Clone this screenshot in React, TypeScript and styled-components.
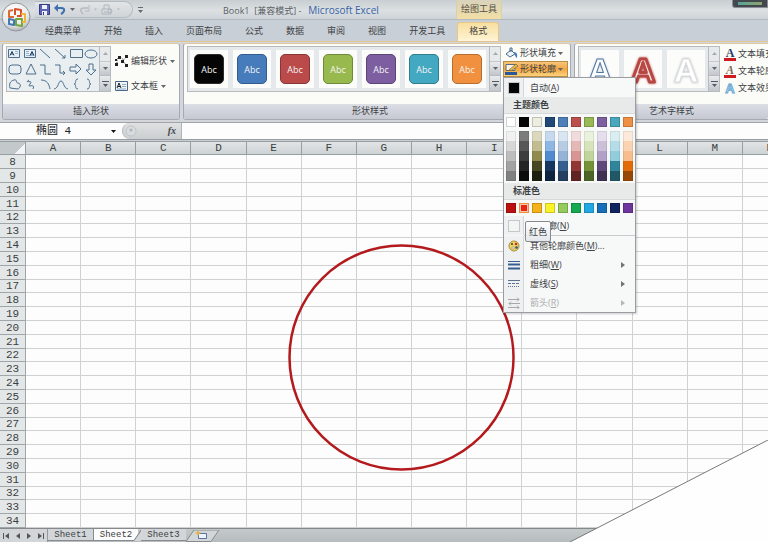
import React from 'react';
import styled, { createGlobalStyle, css } from 'styled-components';

const ui = '"Open Sans", "Noto Sans CJK SC", sans-serif';
const sheetFont = '"Liberation Mono", "Noto Sans CJK SC", monospace';

const GlobalStyle = createGlobalStyle`
  * { box-sizing: border-box; }
  body { margin: 0; background: #c9cfd4; font: 9px/12px ${ui}; color: #3c3f44; overflow: hidden; }
  button, input { font: inherit; color: inherit; border: 0; padding: 0; margin: 0; background: none; }
  svg { display: block; flex: none; }
`;

const Window = styled.div`
  position: relative;
  overflow: hidden;
`;

const TitleBar = styled.header`
  display: flex;
  height: 20px;
  background: linear-gradient(#c8ced2, #dce0e2 55%, #cdd3d8);
  border-bottom: 1px solid #b3babf;
`;

const OfficeButton = styled.button`
  position: absolute;
  left: 1px;
  top: 2px;
  z-index: 2;
`;

const QuickAccess = styled.div`
  display: flex;
  align-items: center;
  gap: 4px;
  width: 98px;
  height: 17px;
  margin: 1px 0 0 35px;
  padding-left: 4px;
  border: 1px solid #b4bcc2;
  border-left: 0;
  border-radius: 0 9px 9px 0;
  background: linear-gradient(#e2e5e7, #cfd4d8);
`;

const Customize = styled.button`
  width: 10px;
  display: flex;
  align-items: center;
  justify-content: flex-end;
`;

const Caption = styled.h1`
  margin: 0 0 0 80px;
  width: 233px;
  font-size: 9px;
  font-weight: 400;
  line-height: 20px;
  white-space: pre;
  color: #5a5e64;
`;

const AppName = styled.span`
  font-size: 10px;
  color: #3563a5;
  margin-left: 7px;
`;

const ContextLabel = styled.div`
  width: 46px;
  text-align: center;
  line-height: 18px;
  background: linear-gradient(#d9d3bd, #f1dfa5);
  border: solid #d9cfaa;
  border-width: 0 1px;
  color: #545045;
`;

const Meter = styled.div`
  width: 36px;
  height: 8px;
  margin-left: auto;
  padding: 2px 5px;
  background: #43484f;
  border: 1px solid #8b8f95;
  border-top: 0;
  border-radius: 0 0 0 3px;
`;

const MeterBar = styled.div`
  height: 3px;
  background: linear-gradient(90deg, #55a49a, #8fa36d);
`;

const Tabs = styled.nav`
  display: flex;
  gap: 1px;
  height: 21px;
  padding-left: 34px;
  background: #c9cfd6;
`;

const Tab = styled.button<{ $active?: boolean }>`
  padding: 0 11px;
  white-space: nowrap;
  ${p => p.$active && css`
    margin-top: 2px;
    padding-bottom: 3px;
    border: 1px solid #e5c887;
    border-bottom: 0;
    border-radius: 3px 3px 0 0;
    background: linear-gradient(#f8dfa0, #fdefc8 80%, #fff5dc);
  `}
`;

const Ribbon = styled.div`
  display: flex;
  gap: 3px;
  padding: 1px 0 2px 2px;
  border-top: 1px solid #e3c792;
  border-bottom: 1px solid #a0a4a9;
  background: #d3d7db;
`;

const GroupBox = styled.section<{ $fill?: boolean }>`
  display: flex;
  flex-direction: column;
  border: 1px solid #a5a9b0;
  border-top-color: #dcc9a0;
  border-radius: 3px;
  background: #fbfbf8;
  ${p => p.$fill && css`
    flex: 1;
    min-width: 0;
    border-right: 0;
    border-radius: 3px 0 0 3px;
  `}
`;

const GroupBody = styled.div<{ $clip?: boolean }>`
  display: flex;
  height: 60px;
  gap: 2px;
  padding: 2px 1px 0 3px;
  overflow: ${p => (p.$clip ? 'hidden' : 'visible')};
`;

const GroupTitle = styled.h2<{ $shift?: boolean }>`
  margin: 0;
  height: 15px;
  padding-right: ${p => (p.$shift ? 14 : 0)}px;
  font-size: 9px;
  font-weight: 400;
  line-height: 14px;
  text-align: center;
  background: linear-gradient(#dcdee6, #c6c9d2);
  border-radius: 0 0 2px 2px;
`;

const Gallery = styled.div`
  display: flex;
  flex: none;
  height: 46px;
  border: 1px solid #b7bbc0;
  background: #e5e9eb;
`;

const ShapesPane = styled.div`
  background: #e9eef0;
`;

const Spinner = styled.div`
  display: grid;
  grid-template-rows: repeat(3, 1fr);
  width: 11px;
  border-left: 1px solid #b7bbc0;
`;

const SpinButton = styled.button<{ $dim?: boolean }>`
  display: grid;
  place-items: center;
  border-bottom: 1px solid #b7bbc0;
  background: ${p => (p.$dim ? '#e9ebec' : 'linear-gradient(#e9ebee, #c2c7cd)')};
  opacity: ${p => (p.$dim ? 0.7 : 1)};
  &:last-child { border-bottom: 0; }
`;

const Cells = styled.div`
  display: flex;
  gap: 5px;
  padding: 3px 3px 3px 2px;
`;

const Cell = styled.button`
  display: grid;
  place-items: center;
  width: 38px;
  background: #fcfcfb;
`;

const StyleChip = styled.span<{ $bg: string; $edge: string }>`
  width: 30px;
  height: 30px;
  border: 1px solid ${p => p.$edge};
  border-radius: 5px;
  background: ${p => p.$bg};
  color: #f4f4f4;
  font-size: 9px;
  line-height: 29px;
`;

const Commands = styled.div<{ $gap: number; $top: number }>`
  display: flex;
  flex-direction: column;
  gap: ${p => p.$gap}px;
  padding-top: ${p => p.$top}px;
`;

const Command = styled.button<{ $hot?: boolean; $roomy?: boolean }>`
  display: flex;
  align-items: center;
  gap: ${p => (p.$roomy ? 3 : 2)}px;
  height: 16px;
  padding: 0 2px 0 1px;
  white-space: nowrap;
  border: 1px solid transparent;
  ${p => p.$hot && css`
    width: 65px;
    border-color: #b98c44;
    background: linear-gradient(#f7c67b, #f3a542 50%, #fbd27c);
  `}
`;

const CommandColumn = styled.div`
  display: flex;
  flex-direction: column;
  width: 66px;
  margin-top: -1px;
`;

const MenuAnchor = styled.div`
  position: relative;
`;

const Menu = styled.div`
  position: absolute;
  z-index: 5;
  top: 16px;
  left: 0;
  width: 133px;
  border: 1px solid #9a9da1;
  background: #f7f8f8;
  box-shadow: 1px 1px 2px #0003;
`;

const MenuItem = styled.button<{ $disabled?: boolean }>`
  display: grid;
  grid-template-columns: 20px 1fr 14px;
  width: 100%;
  height: 19px;
  align-items: center;
  text-align: left;
  color: ${p => (p.$disabled ? '#a9abad' : '#3f4245')};
`;

const Gutter = styled.span`
  display: grid;
  place-items: center;
  height: 19px;
  background: #eff0f1;
  border-right: 1px solid #d4d6d8;
`;

const ItemText = styled.span`
  padding-left: 6px;
  white-space: nowrap;
`;

const MenuHeading = styled.h3`
  margin: 0;
  height: 17px;
  padding-left: 9px;
  font-size: 9px;
  line-height: 16px;
  font-weight: 700;
  background: #e8eaea;
  border-bottom: 1px solid #d6d8da;
`;

const Swatches = styled.div<{ $tight?: boolean }>`
  display: grid;
  grid-template-columns: repeat(10, 10px);
  column-gap: 3px;
  padding: ${p => (p.$tight ? '1px 0 2px 2px' : '3px 0 3px 2px')};
`;

const Swatch = styled.button<{ $color: string; $on?: boolean; $tall?: boolean }>`
  height: 10px;
  background: ${p => p.$color};
  border: ${p => (p.$tall ? '0 solid' : '1px solid')} ${p => (p.$on ? '#ef8b3f' : '#0000002e')};
  box-shadow: ${p => (p.$on ? 'inset 0 0 0 1px #f7c9a0' : 'none')};
`;

const Shades = styled.div`
  display: grid;
  outline: 1px solid #00000014;
  outline-offset: -1px;
`;

const Blank = styled.span<{ $color: string }>`
  width: 12px;
  height: 12px;
  background: ${p => p.$color};
  border: 1px solid #c5c7c8;
`;

const Divider = styled.hr`
  margin: 0 0 0 20px;
  border: 0;
  border-top: 1px solid #c9cccf;
`;

const TipAnchor = styled.div`
  position: relative;
`;

const Tip = styled.div`
  position: absolute;
  z-index: 6;
  left: 21px;
  top: 5px;
  padding: 3px;
  border: 1px solid #85888c;
  border-radius: 2px;
  background: linear-gradient(#fdfdfd, #e4e7ec);
  font-size: 9px;
  line-height: 13px;
`;

const FormulaBar = styled.div`
  display: flex;
  height: 17px;
  border-bottom: 1px solid #989da2;
  background: #fdfdfd;
`;

const NameBox = styled.div`
  display: flex;
  width: 122px;
  align-items: center;
  background: #fdfdfd;
`;

const NameInput = styled.input`
  width: 111px;
  padding-left: 36px;
  font: 11px/14px ${sheetFont};
  color: #222;
`;

const FxZone = styled.div`
  display: flex;
  align-items: center;
  justify-content: space-between;
  width: 60px;
  padding: 0 5px 0 2px;
  border: 1px solid #b2b5b7;
  border-width: 0 1px;
  border-radius: 8px 0 0 8px;
  background: linear-gradient(#dfe1e2, #cbced0);
`;

const Fx = styled.button`
  font: italic 700 10px/14px "Liberation Serif", serif;
  color: #44474b;
`;

const FormulaInput = styled.input`
  flex: 1;
  min-width: 0;
`;

const Sheet = styled.main`
  position: relative;
  margin-top: 1px;
  background: #fcfdfc;
`;

const Grid = styled.table`
  width: calc(100% + 30px);
  table-layout: fixed;
  border-collapse: separate;
  border-spacing: 0;
  font: 11px/12px ${sheetFont};
  color: #3b3f41;
`;

const Corner = styled.th`
  width: 26px;
  height: 14px;
  padding: 0;
  border: solid #989da1;
  border-width: 1px 1px 1px 0;
  background: linear-gradient(135deg, #c3c8cb 72%, #f2f4f5 73%);
`;

const ColHead = styled.th`
  padding: 0;
  height: 14px;
  line-height: 12px;
  font-weight: 400;
  border: solid #989da1;
  border-width: 1px 1px 1px 0;
  background: linear-gradient(#e2e5e6, #cdd2d4);
`;

const Row = styled.tr`
  height: 14px;
  &:nth-child(5n) { height: 13px; }
`;

const RowHead = styled.th`
  padding: 0;
  line-height: 12px;
  font-weight: 400;
  border: solid #a0a5a8;
  border-width: 0 1px 1px 0;
  background: #e4e7e8;
`;

const Data = styled.td`
  padding: 0;
  border: solid #d0d2d2;
  border-width: 0 1px 1px 0;
`;

const Ellipse = styled.svg`
  position: absolute;
  left: 287px;
  top: 102px;
`;

const SheetBar = styled.footer`
  display: flex;
  height: 14px;
  border-top: 1px solid #85898c;
  background: linear-gradient(#c3c8c8, #b7bdbf);
`;

const SheetNav = styled.div`
  display: flex;
  align-items: center;
  justify-content: space-around;
  width: 48px;
  background: #d2d6d8;
  border-right: 1px solid #95999c;
`;

const SheetTabs = styled.div`
  display: flex;
  height: 12px;
  font: 9px/12px ${sheetFont};
`;

const SheetTab = styled.button<{ $active?: boolean }>`
  width: 45px;
  background: ${p => (p.$active ? '#fbfcfb' : '#d2d6d8')};
  border-bottom: 1px solid #888c90;
  ${p => p.$active && css`border-left: 1px solid #888c90;`}
`;

const TabEdge = styled.svg`
  margin: 0 -2px 0 -4px;
`;

const PageCurl = styled.svg`
  position: absolute;
  right: 0;
  bottom: 0;
  z-index: 3;
`;

const Caret = ({ color = '#63676c', size = 5 }: { color?: string; size?: number }) => (
  <svg width={size} height="3" viewBox="0 0 5 3"><path d="M0 0h5L2.500 3z" fill={color} /></svg>
);

const Spin = () => (
  <Spinner>
    <SpinButton $dim aria-label="上一行"><svg width="5" height="3"><path d="M0 3h5L2.500 0z" fill="#8a8f95" /></svg></SpinButton>
    <SpinButton aria-label="下一行"><Caret /></SpinButton>
    <SpinButton aria-label="更多"><svg width="7" height="6"><path d="M0 .5h7" stroke="#555a60" /><path d="M1 3h5L3.500 6z" fill="#555a60" /></svg></SpinButton>
  </Spinner>
);

const OfficeLogo = () => (
  <svg width="30" height="30" viewBox="0 0 30 30">
    <defs>
      <radialGradient id="orb" cx=".45" cy=".3" r=".75">
        <stop offset="0" stopColor="#fff" /><stop offset=".65" stopColor="#e9eaea" /><stop offset="1" stopColor="#a3a8ac" />
      </radialGradient>
    </defs>
    <circle cx="15" cy="15" r="14" fill="url(#orb)" stroke="#90969b" />
    <g fill="none" strokeWidth="2" strokeLinejoin="round">
      <path d="M13 15H8V9l4-1" stroke="#dc6a32" />
      <path d="M14 13V7l6 1v6h-4" stroke="#d7502e" />
      <path d="M8 17v5l5 1v-5z" stroke="#4179b5" />
      <path d="M15 17v6l6 1v-7z" stroke="#76a63e" />
      <path d="M20 12h4v8h-3" stroke="#eeb43c" />
    </g>
  </svg>
);

const ShapeSet = () => (
  <svg width="92" height="44" viewBox="0 0 92 44" fill="none" stroke="#4d6f8d" strokeWidth="1">
    <path d="M1.500 2.500h11v8h-11zM17.500 2.500h11v8h-11z" fill="#e6f0f6" />
    <path d="M3 8.500l2-4 2 4M4 7h2" stroke="#1f3c60" />
    <path d="M8 4.500h3M8 6.500h3M19 4.500h3M19 6.500h3M19 8.500h8" stroke="#9ab2c6" />
    <path d="M23 8.500l2-4 2 4M24 7h2" stroke="#1f3c60" />
    <path d="M33 2l10 9M48 2l10 9M58 11v-3M58 11h-3M63.500 2.500h12v8h-12z" />
    <ellipse cx="84" cy="7" rx="6" ry="4" />
    <rect x="2" y="18" width="12" height="9" rx="3" />
    <path d="M24 17l5 10H19zM33 18h5v9h6M48 18h5v8h5M56 24l2 2-2 2M63 20h6v-3l5 5-5 5v-3h-6zM82 17h4v6h3l-5 5-5-5h3z" />
    <path d="M3 41c-1-4 0-7 4-8 4-1 1 3 4 3 4 1 2 5 0 6zM22 33c-6 4 5-1 1 4s6-2 3 5M34 33c6 0 8 4 9 9M47 42c5-1 4-8 7-8s2 7 7 8M71 32c-4 0-1 5-4 5 3 0 0 5 4 5M80 32c4 0 1 5 4 5-3 0 0 5-4 5" />
  </svg>
);

const EditShapeIcon = () => (
  <svg width="13" height="12"><path d="M2 10V4l3-2 4 3M11 2L8 6l3 4" fill="none" stroke="#555" strokeDasharray="1 1" /><path d="M0 8h3v3H0zM3 1h3v3H3zM10 0h3v3h-3zM6 5h3v3H6zM10 9h3v3h-3zM0 4h2v2H0z" fill="#222" /></svg>
);

const TextBoxIcon = () => (
  <svg width="13" height="12" fill="none" stroke="#4a6684"><path d="M.5 1.500h12v9H.5z" fill="#eef5fa" /><path d="M2 8l2-5 2 5M3 6.500h2" stroke="#222" /><path d="M7 4.500h4M7 6.500h4M2 9h9" stroke="#8fa9bf" /></svg>
);

const BucketIcon = () => (
  <svg width="13" height="12"><path d="M1 7l5-4 4 4-5 3z" fill="#eef3f8" stroke="#486989" /><path d="M5 5V1h2v4" fill="none" stroke="#486989" /><path d="M9 5q4 0 3 6-2-1-3-6" fill="#447fba" /></svg>
);

const OutlineIcon = () => (
  <svg width="13" height="12"><path d="M1 1.500h9v6H1z" fill="#f8f3e5" stroke="#5f6b78" /><path d="M4 7l7-6 2 2-7 5z" fill="#e6b84b" stroke="#705824" strokeWidth=".6" /><path d="M0 9h12v3H0z" fill="#29579c" /></svg>
);

const WordArtText = styled.text`
  font: 700 34px "Liberation Sans", sans-serif;
  text-anchor: middle;
`;

const WordArt = ({ fill, edge, halo, weight }: { fill: string; edge: string; halo: string; weight: number }) => (
  <svg width="32" height="34" viewBox="0 0 32 34" strokeLinejoin="round">
    <WordArtText x="16" y="30" fill={fill} stroke={edge} strokeWidth={weight} style={{ filter: `drop-shadow(0 0 1px ${halo})` }}>A</WordArtText>
  </svg>
);

const GlyphBox = styled.span<{ $kind: 'fill' | 'line' | 'effect' }>`
  width: 12px;
  height: 13px;
  text-align: center;
  font: 700 12px/10px "Liberation Serif", serif;
  color: #263e66;
  border-bottom: 3px solid #cd1b1f;
  ${p => p.$kind === 'line' && css`color: #7c6853; font-style: italic;`}
  ${p => p.$kind === 'effect' && css`
    color: #e8f4fc;
    border: 0;
    font: 700 13px/13px "Liberation Sans", sans-serif;
    -webkit-text-stroke: 1px #65a6d3;
  `}
`;

const chips = [
  ['#050505', '#2c2c2c'], ['#477cbc', '#335c8e'], ['#bb4b4a', '#873735'], ['#97b94e', '#6f8a38'],
  ['#7d5fa1', '#5b4476'], ['#43a8c1', '#307d90'], ['#f1903f', '#b76c30'],
];

const theme = [
  ['#ffffff', '#f1f1f1', '#d7d7d7', '#bdbdbd', '#a2a2a2', '#808080'],
  ['#050505', '#7c7c7c', '#575757', '#3d3d3d', '#252525', '#0c0c0c'],
  ['#edede0', '#dbd8bd', '#c2bc91', '#918a4e', '#474820', '#1d200e'],
  ['#20497a', '#c7d9ef', '#8eb6e5', '#508bd1', '#15365e', '#0e243e'],
  ['#4d7fb9', '#d9e5f1', '#b7cce3', '#94b3d5', '#355f8e', '#243f60'],
  ['#bb504c', '#f2dbdb', '#e5b8b8', '#d99594', '#913635', '#622423'],
  ['#98b954', '#eaf1dc', '#d6e3bc', '#c0d59b', '#749338', '#4c6427'],
  ['#7d60a0', '#e4dfeb', '#cbc0d8', '#b1a1c7', '#5e497a', '#3e3151'],
  ['#49a8bd', '#daeef2', '#b6dde7', '#92cddc', '#31859b', '#205867'],
  ['#ef9144', '#fce9d9', '#fad3b2', '#f8bd8d', '#e36c0a', '#974807'],
];
const standard = ['#bc1111', '#ec2518', '#f6b219', '#fbf325', '#94cb5a', '#16a951', '#21a9e3', '#176fb9', '#102460', '#6e369c'];
const tabs = ['经典菜单', '开始', '插入', '页面布局', '公式', '数据', '审阅', '视图', '开发工具'];
const columns = 'ABCDEFGHIJKLMN'.split('');
const rows = Array.from({ length: 27 }, (_, i) => i + 8);

const Arrow = ({ dim }: { dim?: boolean }) => (
  <svg width="4" height="6"><path d="M0 0l4 3-4 3z" fill={dim ? '#b5b7b9' : '#707478'} /></svg>
);

const OutlineMenu = () => (
  <Menu role="menu">
    <MenuItem role="menuitem">
      <Gutter><Blank $color="#050505" /></Gutter><ItemText>自动(<u>A</u>)</ItemText>
    </MenuItem>
    <MenuHeading>主题颜色</MenuHeading>
    <Swatches>{theme.map(t => <Swatch key={t[0]} $color={t[0]} aria-label={t[0]} />)}</Swatches>
    <Swatches $tight>
      {theme.map(t => (
        <Shades key={t[0]}>{t.slice(1).map(c => <Swatch key={c} $tall $color={c} aria-label={c} />)}</Shades>
      ))}
    </Swatches>
    <MenuHeading>标准色</MenuHeading>
    <Swatches>{standard.map((c, i) => <Swatch key={c} $color={c} $on={i === 1} aria-label={c} />)}</Swatches>
    <TipAnchor>
      <MenuItem role="menuitem">
        <Gutter><Blank $color="#f3f4f4" /></Gutter><ItemText>无轮廓(<u>N</u>)</ItemText>
      </MenuItem>
      <Tip role="tooltip">红色</Tip>
    </TipAnchor>
    <Divider />
    <MenuItem role="menuitem">
      <Gutter>
        <svg width="12" height="12"><circle cx="6" cy="6" r="5" fill="#f0d461" stroke="#a98c35" /><circle cx="4" cy="4" r="1" fill="#3d3d3d" /><circle cx="8" cy="4" r="1.300" fill="#b33" /><circle cx="8.500" cy="7.500" r="1.300" fill="#357" /><circle cx="5" cy="8" r="1.200" fill="#fff" stroke="#765" strokeWidth=".5" /></svg>
      </Gutter>
      <ItemText>其他轮廓颜色(<u>M</u>)...</ItemText>
    </MenuItem>
    <MenuItem role="menuitem">
      <Gutter><svg width="12" height="10"><path d="M0 1.500h12" stroke="#365f91" /><path d="M0 4.500h12" stroke="#365f91" strokeWidth="2" /><path d="M0 8.500h12" stroke="#365f91" strokeWidth="2" /></svg></Gutter>
      <ItemText>粗细(<u>W</u>)</ItemText><Arrow />
    </MenuItem>
    <MenuItem role="menuitem">
      <Gutter><svg width="12" height="10" stroke="#58728f"><path d="M0 1.500h12" /><path d="M0 4.500h12" strokeDasharray="3 1" /><path d="M0 7.500h12" strokeDasharray="1 1" /></svg></Gutter>
      <ItemText>虚线(<u>S</u>)</ItemText><Arrow />
    </MenuItem>
    <MenuItem role="menuitem" $disabled disabled>
      <Gutter><svg width="12" height="12" fill="none" stroke="#a6a8aa"><path d="M0 2.500h11M9 .5l2 2-2 2M1 6.500h11M3 4.500l-2 2 2 2M0 10.500h11M9 8.500l2 2-2 2" /></svg></Gutter>
      <ItemText>箭头(<u>R</u>)</ItemText><Arrow dim />
    </MenuItem>
  </Menu>
);

export default function App() {
  return (
    <Window>
      <GlobalStyle />
      <OfficeButton aria-label="Office"><OfficeLogo /></OfficeButton>
      <TitleBar>
        <QuickAccess>
          <button aria-label="保存"><svg width="11" height="11"><path d="M.5.5h10v10H.5z" fill="#5c63b6" stroke="#353b82" /><path d="M3 1h5v4H3zM3 7h5v4H3z" fill="#eef0fb" /><path d="M4 8h1v3H4z" fill="#353b82" /></svg></button>
          <button aria-label="撤消"><svg width="12" height="11"><path d="M3 4h4q4 0 3 3-1 2-3 3" fill="none" stroke="#3e6fae" strokeWidth="2" /><path d="M0 4l4-4v8z" fill="#3e6fae" /></svg></button>
          <Caret />
          <button aria-label="恢复"><svg width="11" height="11"><path d="M9 4H5Q1 4 2 7q1 2 2 3" fill="none" stroke="#b4bac0" strokeWidth="1.500" /><path d="M10 1v6H6" fill="none" stroke="#b4bac0" /></svg></button>
          <Caret color="#b4bac0" size={3} />
          <button aria-label="打印预览"><svg width="12" height="11" fill="none" stroke="#b0b6bc"><path d="M1 5h9v5H1zM3 5V1h5v4M3 8h5" /><circle cx="9" cy="7" r="2" /></svg></button>
          <Caret color="#b4bac0" size={3} />
        </QuickAccess>
        <Customize aria-label="自定义"><svg width="5" height="6"><path d="M0 .5h5" stroke="#666a70" /><path d="M0 3h5L2.500 6z" fill="#666a70" /></svg></Customize>
        <Caption>Book1  [兼容模式] -<AppName>Microsoft Excel</AppName></Caption>
        <ContextLabel>绘图工具</ContextLabel>
        <Meter><MeterBar /></Meter>
      </TitleBar>
      <Tabs>
        {tabs.map(t => <Tab key={t}>{t}</Tab>)}
        <Tab $active>格式</Tab>
      </Tabs>
      <Ribbon>
        <GroupBox>
          <GroupBody>
            <Gallery><ShapesPane><ShapeSet /></ShapesPane><Spin /></Gallery>
            <Commands $gap={9} $top={7}>
              <Command $roomy><EditShapeIcon />编辑形状<Caret /></Command>
              <Command $roomy><TextBoxIcon />文本框<Caret /></Command>
            </Commands>
          </GroupBody>
          <GroupTitle>插入形状</GroupTitle>
        </GroupBox>
        <GroupBox>
          <GroupBody>
            <Gallery>
              <Cells>
                {chips.map(([bg, edge]) => <Cell key={bg}><StyleChip $bg={bg} $edge={edge}>Abc</StyleChip></Cell>)}
              </Cells>
              <Spin />
            </Gallery>
            <CommandColumn>
              <Command><BucketIcon />形状填充<Caret /></Command>
              <MenuAnchor>
                <Command $hot><OutlineIcon />形状轮廓<Caret /></Command>
                <OutlineMenu />
              </MenuAnchor>
            </CommandColumn>
          </GroupBody>
          <GroupTitle $shift>形状样式</GroupTitle>
        </GroupBox>
        <GroupBox $fill>
          <GroupBody $clip>
            <Gallery>
              <Cells>
                <Cell><WordArt fill="#fcfdfe" edge="#53779c" halo="#c3d0dc" weight={1} /></Cell>
                <Cell><WordArt fill="#f7e5e3" edge="#b84744" halo="#b84744" weight={3} /></Cell>
                <Cell><WordArt fill="#ffffff" edge="#dddfe1" halo="#b0b3b6" weight={1} /></Cell>
              </Cells>
              <Spin />
            </Gallery>
            <Commands $gap={1} $top={0}>
              <Command><GlyphBox $kind="fill">A</GlyphBox>文本填充<Caret /></Command>
              <Command><GlyphBox $kind="line">A</GlyphBox>文本轮廓<Caret /></Command>
              <Command><GlyphBox $kind="effect">A</GlyphBox>文本效果<Caret /></Command>
            </Commands>
          </GroupBody>
          <GroupTitle>艺术字样式</GroupTitle>
        </GroupBox>
      </Ribbon>
      <FormulaBar>
        <NameBox><NameInput aria-label="名称框" defaultValue="椭圆 4" /><Caret color="#111" /></NameBox>
        <FxZone>
          <svg width="12" height="12"><circle cx="6" cy="6" r="5" fill="#d9dcde" stroke="#bfc3c6" /><circle cx="6" cy="5" r="1.500" fill="#aeb3b8" /></svg>
          <Fx aria-label="插入函数">fx</Fx>
        </FxZone>
        <FormulaInput aria-label="编辑栏" />
      </FormulaBar>
      <Sheet>
        <Grid>
          <thead>
            <tr><Corner aria-label="全选" />{columns.map(c => <ColHead key={c} scope="col">{c}</ColHead>)}</tr>
          </thead>
          <tbody>
            {rows.map(r => (
              <Row key={r}><RowHead scope="row">{r}</RowHead>{columns.map(c => <Data key={c} />)}</Row>
            ))}
          </tbody>
        </Grid>
        <Ellipse width="229" height="229" viewBox="0 0 229 229"><circle cx="114.500" cy="114.500" r="112" fill="none" stroke="#b3191d" strokeWidth="2.500" /></Ellipse>
      </Sheet>
      <SheetBar>
        <SheetNav>
          <svg width="6" height="6"><path d="M.5 0v6" stroke="#555" /><path d="M6 0L2 3l4 3z" fill="#555" /></svg>
          <svg width="4" height="6"><path d="M4 0L0 3l4 3z" fill="#555" /></svg>
          <svg width="4" height="6"><path d="M0 0l4 3-4 3z" fill="#555" /></svg>
          <svg width="6" height="6"><path d="M5.500 0v6" stroke="#555" /><path d="M0 0l4 3-4 3z" fill="#555" /></svg>
        </SheetNav>
        <SheetTabs>
          <SheetTab>Sheet1</SheetTab>
          <SheetTab $active>Sheet2</SheetTab>
          <TabEdge width="9" height="12"><path d="M0 11.500L8 0h1v12H0z" fill="#d2d6d8" /><path d="M0 11.500L8 0" stroke="#777b7f" /></TabEdge>
          <SheetTab>Sheet3</SheetTab>
        </SheetTabs>
        <button aria-label="插入工作表">
          <svg width="34" height="12"><path d="M8 0h25l-8 11.500H0z" fill="#d2d6d8" stroke="#888c90" /><path d="M12.500 3.500h8v5h-8z" fill="#eef3fa" stroke="#5b71a0" /><path d="M12 0l1 2 2 1-2 1-1 2-1-2-2-1 2-1z" fill="#e5b546" /></svg>
        </button>
      </SheetBar>
      <PageCurl width="198" height="102" viewBox="0 0 198 102"><path d="M0 102L198 0v102z" fill="#fefefe" /><path d="M0 102L198 0" stroke="#77797b" fill="none" /></PageCurl>
    </Window>
  );
}
